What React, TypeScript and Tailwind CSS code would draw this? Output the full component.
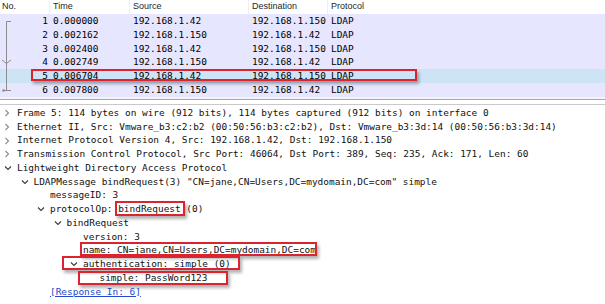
import React from "react";

const mono = { fontFamily: '"DejaVu Sans Mono", "Liberation Mono", monospace' };

const packets = [
  { no: 1, time: "0.000000", src: "192.168.1.42", dst: "192.168.1.150" },
  { no: 2, time: "0.002162", src: "192.168.1.150", dst: "192.168.1.42" },
  { no: 3, time: "0.002400", src: "192.168.1.42", dst: "192.168.1.150" },
  { no: 4, time: "0.002749", src: "192.168.1.150", dst: "192.168.1.42" },
  { no: 5, time: "0.006704", src: "192.168.1.42", dst: "192.168.1.150" },
  { no: 6, time: "0.007800", src: "192.168.1.150", dst: "192.168.1.42" },
];

type Node = { level: number; arrow: "right" | "down" | null; text: React.ReactNode };

const details: Node[] = [
  { level: 0, arrow: "right", text: "Frame 5: 114 bytes on wire (912 bits), 114 bytes captured (912 bits) on interface 0" },
  { level: 0, arrow: "right", text: "Ethernet II, Src: Vmware_b3:c2:b2 (00:50:56:b3:c2:b2), Dst: Vmware_b3:3d:14 (00:50:56:b3:3d:14)" },
  { level: 0, arrow: "right", text: "Internet Protocol Version 4, Src: 192.168.1.42, Dst: 192.168.1.150" },
  { level: 0, arrow: "right", text: "Transmission Control Protocol, Src Port: 46064, Dst Port: 389, Seq: 235, Ack: 171, Len: 60" },
  { level: 0, arrow: "down", text: "Lightweight Directory Access Protocol" },
  { level: 1, arrow: "down", text: 'LDAPMessage bindRequest(3) "CN=jane,CN=Users,DC=mydomain,DC=com" simple' },
  { level: 2, arrow: null, text: "messageID: 3" },
  { level: 2, arrow: "down", text: "protocolOp: bindRequest (0)" },
  { level: 3, arrow: "down", text: "bindRequest" },
  { level: 4, arrow: null, text: "version: 3" },
  { level: 4, arrow: null, text: "name: CN=jane,CN=Users,DC=mydomain,DC=com" },
  { level: 4, arrow: "down", text: "authentication: simple (0)" },
  { level: 5, arrow: null, text: "simple: PassWord123" },
  {
    level: 2,
    arrow: null,
    text: <span className="text-[#2449cc] underline">[Response In: 6]</span>,
  },
];

const levelPad = [
  "pl-[4px]",
  "pl-[20.5px]",
  "pl-[37px]",
  "pl-[53.5px]",
  "pl-[70px]",
  "pl-[86.5px]",
];

function Chevron({ dir }: { dir: "right" | "down" }) {
  if (dir === "right") {
    return (
      <svg width="6" height="8" viewBox="0 0 6 8" className="block">
        <polyline points="1.5,1 4.5,4 1.5,7" fill="none" stroke="#8a8a8a" strokeWidth="1.1" />
      </svg>
    );
  }
  return (
    <svg width="8" height="6" viewBox="0 0 8 6" className="block">
      <polyline points="1,1.5 4,4.5 7,1.5" fill="none" stroke="#3a3a3a" strokeWidth="1.1" />
    </svg>
  );
}

function RedBox({ cls }: { cls: string }) {
  return (
    <div
      className={`absolute border-2 border-[#dc2430] shadow-[2px_3px_3px_rgba(0,0,0,0.3)] ${cls}`}
    />
  );
}

export default function App() {
  return (
    <div className="relative w-[605px] h-[304px] bg-white overflow-hidden text-black">
      {/* Packet list header */}
      <div
        className="flex h-[14px] items-center text-[9px] text-[#1e1e1e] bg-white"
        style={{ fontFamily: '"Liberation Sans", Arial, sans-serif' }}
      >
        <div className="w-[50px] pl-[2px] border-r border-[#eeeeee] h-full flex items-center">No.</div>
        <div className="w-[80px] pl-[3px] border-r border-[#eeeeee] h-full flex items-center">Time</div>
        <div className="w-[119px] pl-[3px] border-r border-[#eeeeee] h-full flex items-center">Source</div>
        <div className="w-[79px] pl-[3px] border-r border-[#eeeeee] h-full flex items-center">Destination</div>
        <div className="flex-1 pl-[3px] h-full flex items-center">Protocol</div>
      </div>

      {/* Packet rows */}
      <div className="relative text-[9.45px]" style={mono}>
        {packets.map((p) => (
          <div
            key={p.no}
            className={`flex h-[13.86px] items-center whitespace-pre ${
              p.no === 5 ? "bg-[#cde3f6]" : "bg-[#e7e6ff]"
            }`}
          >
            <div className="w-[50px] pr-[2px] text-right">{p.no}</div>
            <div className="w-[80px] pl-[3px]">{p.time}</div>
            <div className="w-[119px] pl-[3px]">{p.src}</div>
            <div className="w-[79px] pl-[3px]">{p.dst}</div>
            <div className="flex-1 pl-[3px]">LDAP</div>
          </div>
        ))}
        {/* related packet tree marks */}
        <svg
          width="14"
          height="83"
          viewBox="0 0 14 83"
          className="absolute left-0 top-0"
        >
          <g stroke="#8c8c8c" strokeWidth="1" fill="none">
            <polyline points="11,7.5 6.5,7.5 6.5,76" />
            <polyline points="2,46 6.5,49.5 11,46" />
            <line x1="3" y1="76.5" x2="11" y2="76.5" />
          </g>
          <circle cx="3.5" cy="76.5" r="1.3" fill="#8c8c8c" />
        </svg>
      </div>

      {/* Splitter */}
      <div className="h-[2px] bg-[#f4f4f8]" />
      <div className="h-[1px] bg-[#a9a9a9]" />
      <div className="h-[4px] bg-white" />
      <div className="h-[1px] bg-[#c9c9c9]" />
      <div className="h-[1px] bg-white" />

      {/* Details tree */}
      <div className="text-[9.45px] text-[#111]" style={mono}>
        {details.map((d, i) => (
          <div key={i} className={`flex h-[13.75px] items-center whitespace-pre ${levelPad[d.level]}`}>
            <div className="w-[13px] h-full flex items-center">
              {d.arrow ? <Chevron dir={d.arrow} /> : null}
            </div>
            <div>{d.text}</div>
          </div>
        ))}
      </div>

      {/* Red annotation boxes */}
      <RedBox cls="left-[31px] top-[69px] w-[386px] h-[12px]" />
      <RedBox cls="left-[115px] top-[201px] w-[70px] h-[15px]" />
      <RedBox cls="left-[80px] top-[242px] w-[237px] h-[14px]" />
      <RedBox cls="left-[62px] top-[256px] w-[178px] h-[14px]" />
      <RedBox cls="left-[78px] top-[271px] w-[150px] h-[14px]" />
    </div>
  );
}
